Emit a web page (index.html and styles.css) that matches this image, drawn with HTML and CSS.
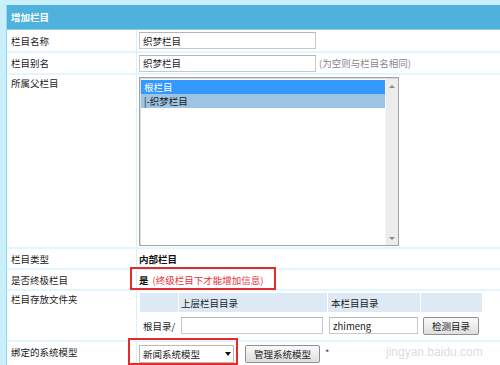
FILE: index.html
```html
<!DOCTYPE html>
<html>
<head>
<meta charset="utf-8">
<link rel="stylesheet" href="styles.css">
</head>
<body>
<div class="page">
  <div class="form">
    <div class="head">增加栏目</div>

    <div class="lab r-mid">栏目名称</div>
    <div class="val r-mid"><input class="inp w176" type="text" value="织梦栏目"></div>

    <div class="lab r-mid">栏目别名</div>
    <div class="val r-mid"><input class="inp w176" type="text" value="织梦栏目"><span class="hint">(为空则与栏目名相同)</span></div>

    <div class="lab r-top">所属父栏目</div>
    <div class="val r-top">
      <div class="listbox">
        <div class="opts">
          <div class="opt sel">根栏目</div>
          <div class="opt sel2">|-织梦栏目</div>
        </div>
        <div class="sbar">
          <span class="arr up"></span>
          <span class="arr down"></span>
        </div>
      </div>
    </div>

    <div class="lab r-mid">栏目类型</div>
    <div class="val r-mid"><b class="strong">内部栏目</b></div>

    <div class="lab r-mid">是否终极栏目</div>
    <div class="val r-mid mark-host"><b class="strong">是</b><span class="red">(终级栏目下才能增加信息)</span><span class="mark mark1"></span></div>

    <div class="lab r-top">栏目存放文件夹</div>
    <div class="val r-top">
      <div class="dirs">
        <div class="dh"></div>
        <div class="dh">上层栏目目录</div>
        <div class="dh">本栏目目录</div>
        <div class="dh"></div>
        <div class="dc">根目录/</div>
        <div class="dc"><input class="inp w142" type="text" value=""></div>
        <div class="dc"><input class="inp w88" type="text" value="zhimeng"></div>
        <div class="dc"><button class="btn bcheck" type="button">检测目录</button></div>
      </div>
    </div>

    <div class="lab r-last">绑定的系统模型</div>
    <div class="val r-last mark-host">
      <div class="dropdown"><span>新闻系统模型</span><span class="tri"></span></div>
      <button class="btn bmodel" type="button">管理系统模型</button>
      <span class="star">*</span>
      <span class="mark mark2"></span>
    </div>
  </div>
  <div class="wm">jingyan.baidu.com</div>
</div>
</body>
</html>
```

FILE: styles.css
```css
html, body {
  margin: 0;
  padding: 0;
  overflow: hidden;
  background: #c9effb;
}
body {
  width: 500px;
  height: 365px;
  font-family: "Noto Sans CJK SC", "Noto Sans", sans-serif;
  font-size: 9.5px;
  color: #1a1a1a;
}
.page {
  position: relative;
  padding: 5px 0 0 6px;
}
.form {
  display: grid;
  grid-template-columns: 130px 370px;
  grid-template-rows: 25px 23px 22px 174px 21px 21px 51px 30px;
  border-left: 1px solid #93d6f0;
  background: #fff;
}
.head {
  grid-column: 1 / 3;
  background: #4eb2dd;
  color: #fff;
  font-weight: bold;
  padding-left: 4px;
  display: flex;
  align-items: center;
  border-bottom: 1px solid #8ccfec;
  box-sizing: border-box;
}
.lab, .val {
  box-sizing: border-box;
  border-bottom: 2px solid #e4f6fd;
  display: flex;
}
.lab {
  padding-left: 4px;
  border-right: 1px solid #d6f1fb;
}
.val {
  padding-left: 2px;
}
.r-mid { align-items: center; }
.r-top { align-items: flex-start; padding-top: 2px; }
.lab.r-top { padding-top: 1px; }
.r-last { align-items: flex-start; }
.lab.r-last { padding-top: 3px; }
.val.r-last { padding-top: 3px; }

.inp {
  box-sizing: border-box;
  height: 17px;
  border: 1px solid #c9c9c9;
  border-top-color: #b5b5b5;
  background: #fff;
  font-family: "Noto Sans CJK SC", "Noto Sans", sans-serif;
  font-size: 9.5px;
  color: #1a1a1a;
  padding: 0 3px;
  margin: 0;
  outline: none;
}
.w176 { width: 177px; }
.w142 { width: 142px; }
.w88 { width: 89px; }
.hint {
  color: #888;
  margin-left: 3px;
}

.listbox {
  box-sizing: border-box;
  width: 260px;
  height: 169px;
  border: 1px solid #a3a3a3;
  box-shadow: inset 1px 1px 0 #dcdcdc;
  display: flex;
  padding: 1px 0 0 1px;
  background: #fff;
}
.opts { flex: 1; padding-top: 1px; }
.opt {
  height: 14px;
  line-height: 14px;
  padding-left: 3px;
}
.opt.sel { background: #3399ff; color: #fff; }
.opt.sel2 { background: #9ec4e3; color: #1a1a1a; }
.sbar {
  width: 13px;
  background: #ececec;
  border-left: 1px solid #f6f6f6;
  display: flex;
  flex-direction: column;
  justify-content: space-between;
  align-items: center;
  padding: 6px 0 5px;
  box-sizing: border-box;
}
.arr {
  width: 0;
  height: 0;
  border-left: 3px solid transparent;
  border-right: 3px solid transparent;
}
.arr.up { border-bottom: 3px solid #8a8a8a; }
.arr.down { border-top: 3px solid #8a8a8a; }

.strong { font-weight: bold; color: #111; }
.red { color: #e8303a; margin-left: 4px; }

.mark-host { position: relative; }
.mark {
  position: absolute;
  border: 2px solid #e52a2a;
  box-sizing: border-box;
  pointer-events: none;
}
.mark1 { left: -7px; top: -3px; width: 146px; height: 23px; }
.mark2 { left: -9px; top: -4px; width: 110px; height: 27px; }

.dirs {
  display: grid;
  grid-template-columns: 38px 148px 92px 61px;
  grid-template-rows: 19px 27px;
  column-gap: 1px;
  margin-left: 1px;
}
.dh {
  background: #dde9f4;
  display: flex;
  align-items: center;
  padding-left: 2px;
}
.dh:nth-child(3) { padding-left: 3px; }
.dc {
  display: flex;
  align-items: center;
  padding-left: 2px;
}
.dc:nth-child(5) { padding-left: 3px; }
.dc:nth-child(6) { padding-left: 2px; }
.dc:nth-child(7) { padding-left: 1px; }
.dc:nth-child(8) { padding-left: 2px; }

.btn {
  box-sizing: border-box;
  height: 18px;
  border: 1px solid #8f8f8f;
  border-radius: 2px;
  background: linear-gradient(#fafafa, #dedede);
  font-family: "Noto Sans CJK SC", "Noto Sans", sans-serif;
  font-size: 9.5px;
  color: #1a1a1a;
  padding: 0 3px;
  margin: 0;
}
.bcheck { width: 56px; }
.bmodel { width: 75px; margin-left: 11px; }

.dropdown {
  box-sizing: border-box;
  width: 95px;
  height: 18px;
  border: 1px solid #b9b9b9;
  background: #fff;
  display: flex;
  align-items: center;
  justify-content: space-between;
  padding: 0 2px 0 3px;
}
.tri {
  width: 0;
  height: 0;
  border-left: 3px solid transparent;
  border-right: 3px solid transparent;
  border-top: 4px solid #111;
}
.star { margin-left: 5px; color: #444; margin-top: 1px; }

.wm {
  position: absolute;
  left: 386px;
  top: 345px;
  color: rgba(190, 190, 190, 0.55);
  font-family: "Liberation Sans", sans-serif;
  font-size: 12px;
  line-height: 14px;
  pointer-events: none;
}
```
